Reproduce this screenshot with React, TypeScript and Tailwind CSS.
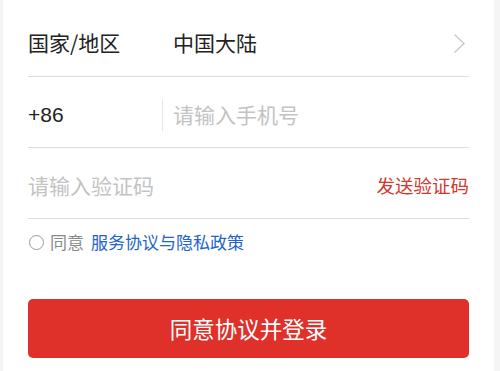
import { useState } from 'react'

const font = "font-['Noto_Sans_CJK_SC','Noto_Sans',sans-serif]"

const Chevron = () => (
  <svg width="13" height="21" viewBox="0 0 13 21" fill="none" className="mr-[3px]">
    <path d="M1.5 1.5 L11 10.5 L1.5 19.5" stroke="#c9c9c9" strokeWidth="1.4" />
  </svg>
)

const App = () => {
  const [agreed, setAgreed] = useState(false)

  return (
    <div className={`flex min-h-[371px] w-full bg-[#f5f5f5] pl-[3px] pr-[6px] ${font}`}>
      <div className="flex-1 bg-white px-[25px]">
        {/* country / region */}
        <div className="flex h-[77px] items-center border-b border-[#dcdcdc] pt-[10px]">
          <span className="w-[145px] text-[21px] text-[#222]">国家/地区</span>
          <span className="flex-1 text-[21px] text-[#222]">中国大陆</span>
          <Chevron />
        </div>

        {/* phone */}
        <div className="flex h-[71px] items-center border-b border-[#dcdcdc] pt-[6px]">
          <span className="w-[134px] font-['Liberation_Sans',sans-serif] text-[21px] text-[#222]">+86</span>
          <span className="h-[32px] w-px bg-[#e6e6e6]" />
          <input
            className="ml-[10px] flex-1 bg-transparent text-[21px] text-[#222] outline-none placeholder:text-[#c3c3c3]"
            placeholder="请输入手机号"
          />
        </div>

        {/* verification code */}
        <div className="flex h-[71px] items-center border-b border-[#dcdcdc] pt-[6px]">
          <input
            className="min-w-0 flex-1 bg-transparent text-[21px] text-[#222] outline-none placeholder:text-[#c3c3c3]"
            placeholder="请输入验证码"
          />
          <button className="text-[18.5px] text-[#d0392f]">发送验证码</button>
        </div>

        {/* agreement */}
        <div className="flex h-[46px] items-center text-[17px]">
          <button
            onClick={() => setAgreed(!agreed)}
            className={`ml-[1px] h-[15px] w-[15px] rounded-full border ${
              agreed ? 'border-[#e0302a] bg-[#e0302a]' : 'border-[#9a9a9a] bg-white'
            }`}
          />
          <span className="ml-[6px] text-[#8a8a8a]">同意</span>
          <a className="ml-[7px] text-[#2264c8]">服务协议与隐私政策</a>
        </div>

        {/* submit */}
        <button className="mt-[34px] flex h-[59px] w-full items-center justify-center rounded-[5px] bg-[#e0302a] text-[22.5px] text-white">
          同意协议并登录
        </button>
      </div>
    </div>
  )
}

export default App
